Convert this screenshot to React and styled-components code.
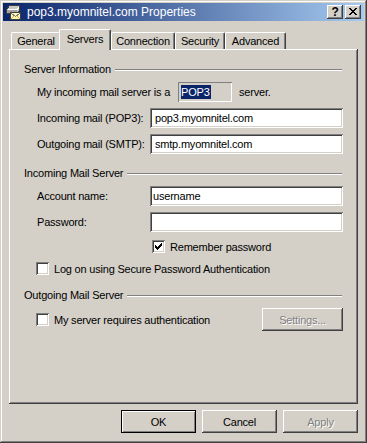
import React from "react";
import styled, { createGlobalStyle } from "styled-components";

const GlobalStyle = createGlobalStyle`
  html, body {
    margin: 0;
    padding: 0;
    background: #d4d0c8;
  }
  body {
    font-family: "Liberation Sans", Arial, sans-serif;
    font-size: 11px;
    letter-spacing: -0.2px;
    color: #000;
  }
`;

// pixel glyphs: [x, y, length] runs, one px high
const CHECK = [[6,0,1],[5,1,2],[0,2,1],[4,2,3],[0,3,2],[3,3,3],[0,4,5],[1,5,3],[2,6,1]];
const CROSS = [[0,0,2],[6,0,2],[1,1,2],[5,1,2],[2,2,4],[3,3,2],[2,4,4],[1,5,2],[5,5,2],[0,6,2],[6,6,2]];

const PixelGlyph = ({ rows, w, h }) => (
  <svg width={w} height={h} viewBox={`0 0 ${w} ${h}`} shapeRendering="crispEdges">
    {rows.map(([x, y, len], i) => (
      <rect key={i} x={x} y={y} width={len} height={1} fill="#000" />
    ))}
  </svg>
);

const MailIcon = () => (
  <svg width="16" height="16" viewBox="0 0 16 16" shapeRendering="crispEdges">
    <path d="M1.5 5.5 L4.5 1.5 H14.5 V6.5 L12.5 9.5 H1.5 Z" fill="#c8c8c8" stroke="#404040" />
    <path d="M2.5 5.5 H12.5 L14 3" fill="none" stroke="#ffffff" />
    <rect x="2" y="6" width="10" height="3" fill="#a0a0a0" />
    <rect x="5.5" y="8.5" width="10" height="7" fill="#fff6b0" stroke="#404040" />
    <path d="M6 9 L10.5 12.5 L15 9" fill="none" stroke="#808080" />
    <path d="M6 15 L9 12 M15 15 L12 12" fill="none" stroke="#c8b060" />
  </svg>
);

const raised = `
  box-shadow: inset -1px -1px #404040, inset 1px 1px #ffffff,
    inset -2px -2px #808080, inset 2px 2px #d4d0c8;
`;
const sunken = `
  box-shadow: inset 1px 1px #808080, inset -1px -1px #ffffff,
    inset 2px 2px #404040, inset -2px -2px #d4d0c8;
`;

const Window = styled.div`
  box-sizing: border-box;
  width: 367px;
  height: 443px;
  padding: 3px;
  background: #d4d0c8;
  box-shadow: inset -1px -1px #404040, inset 1px 1px #d4d0c8,
    inset -2px -2px #808080, inset 2px 2px #ffffff;
  display: flex;
  flex-direction: column;
`;

const TitleBar = styled.div`
  height: 18px;
  flex-shrink: 0;
  display: flex;
  align-items: center;
  padding: 0 3px 0 2px;
  background: linear-gradient(to right, #0a246a, #a6caf0);
  color: #fff;
`;

const TitleText = styled.span`
  font-size: 12px;
  letter-spacing: 0;
  margin-left: 6px;
  white-space: nowrap;
`;

const CaptionButtons = styled.div`
  margin-left: auto;
  display: flex;
  gap: 2px;
`;

const CaptionButton = styled.div`
  box-sizing: border-box;
  width: 16px;
  height: 14px;
  background: #d4d0c8;
  ${raised}
  display: flex;
  align-items: flex-start;
  justify-content: ${(p) => (p.$glyph ? "flex-start" : "center")};
  padding: ${(p) => (p.$glyph ? "3px 0 0 4px" : "0")};
  color: #000;
  font-weight: bold;
  font-size: 12px;
  line-height: 14px;
`;

const TabStrip = styled.div`
  height: 28px;
  flex-shrink: 0;
  display: flex;
  align-items: flex-end;
  margin: 0 6px;
  padding-left: 2px;
`;

const Tab = styled.div`
  position: relative;
  z-index: ${(p) => (p.$active ? 2 : 1)};
  box-sizing: border-box;
  width: ${(p) => p.$w}px;
  height: ${(p) => (p.$active ? 21 : 17)}px;
  margin-left: ${(p) => (p.$active ? -2 : 0)}px;
  margin-bottom: ${(p) => (p.$active ? -1 : 0)}px;
  padding-bottom: ${(p) => (p.$active ? 2 : 0)}px;
  background: #d4d0c8;
  border-left: 1px solid #fff;
  border-top: 1px solid #fff;
  border-right: 1px solid #404040;
  border-radius: 2px 2px 0 0;
  box-shadow: inset -1px 0 #808080;
  display: flex;
  align-items: center;
  justify-content: center;
  white-space: nowrap;
`;

const Panel = styled.div`
  box-sizing: border-box;
  height: 355px;
  flex-shrink: 0;
  margin: 0 6px;
  padding: 13px 16px 0 15px;
  box-shadow: inset -1px -1px #404040, inset 1px 1px #ffffff, inset -2px -2px #808080;
  display: flex;
  flex-direction: column;
`;

const GroupHeader = styled.div`
  height: 14px;
  margin-top: ${(p) => p.$mt || 0}px;
  display: flex;
  align-items: center;
  white-space: nowrap;
`;

const GroupRule = styled.div`
  flex: 1;
  margin: 1px 0 0 4px;
  border-top: 1px solid #808080;
  border-bottom: 1px solid #ffffff;
`;

const Row = styled.div`
  height: ${(p) => p.$h || 20}px;
  margin-top: ${(p) => p.$mt}px;
  margin-right: -1px;
  padding-left: ${(p) => (p.$indent === undefined ? 13 : p.$indent)}px;
  display: flex;
  align-items: center;
  white-space: nowrap;
`;

const Label = styled.span`
  width: ${(p) => p.$w}px;
  flex-shrink: 0;
`;

const TextBox = styled.div`
  flex: 1;
  box-sizing: border-box;
  height: 20px;
  background: #fff;
  ${sunken}
  padding: 0 ${(p) => p.$pad}px;
  display: flex;
  align-items: center;
`;

const StaticBox = styled.div`
  box-sizing: border-box;
  width: 54px;
  height: 20px;
  padding-left: 3px;
  box-shadow: inset 1px 1px #808080, inset -1px -1px #ffffff;
  display: flex;
  align-items: center;
  margin-right: 7px;
`;

const Selected = styled.span`
  background: #0a246a;
  color: #fff;
  line-height: 14px;
  padding: 0 1px 0 0;
`;

const CheckBox = styled.span`
  box-sizing: border-box;
  width: 13px;
  height: 13px;
  flex-shrink: 0;
  margin-right: 5px;
  background: #fff;
  ${sunken}
  padding: 3px 0 0 3px;
  display: flex;
  align-items: flex-start;
`;

const Button = styled.div`
  box-sizing: border-box;
  width: ${(p) => p.$w || 75}px;
  height: 23px;
  flex-shrink: 0;
  background: #d4d0c8;
  ${(p) =>
    p.$default
      ? "box-shadow: inset 0 0 0 1px #000, inset 2px 2px #fff, inset -2px -2px #808080;"
      : raised}
  color: ${(p) => (p.$disabled ? "#808080" : "#000")};
  text-shadow: ${(p) => (p.$disabled ? "1px 1px 0 #fff" : "none")};
  display: flex;
  align-items: center;
  justify-content: center;
  margin-left: ${(p) => (p.$push ? "auto" : "0")};
`;

const ButtonRow = styled.div`
  height: 23px;
  margin-top: 6px;
  padding-right: 6px;
  display: flex;
  justify-content: flex-end;
  gap: 6px;
`;

const tabs = [
  { name: "General", w: 50 },
  { name: "Servers", w: 52, active: true },
  { name: "Connection", w: 64 },
  { name: "Security", w: 50 },
  { name: "Advanced", w: 61 },
];

export default function App() {
  return (
    <>
      <GlobalStyle />
      <Window>
        <TitleBar>
          <MailIcon />
          <TitleText>pop3.myomnitel.com Properties</TitleText>
          <CaptionButtons>
            <CaptionButton>?</CaptionButton>
            <CaptionButton $glyph>
              <PixelGlyph rows={CROSS} w={8} h={7} />
            </CaptionButton>
          </CaptionButtons>
        </TitleBar>

        <TabStrip>
          {tabs.map((t) => (
            <Tab key={t.name} $w={t.w} $active={t.active}>
              {t.name}
            </Tab>
          ))}
        </TabStrip>

        <Panel>
          <GroupHeader>
            Server Information
            <GroupRule />
          </GroupHeader>
          <Row $mt={6}>
            <Label $w={141}>My incoming mail server is a</Label>
            <StaticBox>
              <Selected>POP3</Selected>
            </StaticBox>
            server.
          </Row>
          <Row $mt={6}>
            <Label $w={113}>Incoming mail (POP3):</Label>
            <TextBox $pad={5}>pop3.myomnitel.com</TextBox>
          </Row>
          <Row $mt={6}>
            <Label $w={113}>Outgoing mail (SMTP):</Label>
            <TextBox $pad={5}>smtp.myomnitel.com</TextBox>
          </Row>

          <GroupHeader $mt={12}>
            Incoming Mail Server
            <GroupRule />
          </GroupHeader>
          <Row $mt={6}>
            <Label $w={113}>Account name:</Label>
            <TextBox $pad={3}>username</TextBox>
          </Row>
          <Row $mt={6}>
            <Label $w={113}>Password:</Label>
            <TextBox $pad={3} />
          </Row>
          <Row $mt={8} $h={13} $indent={128}>
            <CheckBox>
              <PixelGlyph rows={CHECK} w={7} h={7} />
            </CheckBox>
            Remember password
          </Row>
          <Row $mt={9} $h={13} $indent={12}>
            <CheckBox />
            Log on using Secure Password Authentication
          </Row>

          <GroupHeader $mt={13}>
            Outgoing Mail Server
            <GroupRule />
          </GroupHeader>
          <Row $mt={6} $h={23} $indent={12}>
            <CheckBox />
            My server requires authentication
            <Button $w={81} $disabled $push>
              Settings...
            </Button>
          </Row>
        </Panel>

        <ButtonRow>
          <Button $default>OK</Button>
          <Button>Cancel</Button>
          <Button $disabled>Apply</Button>
        </ButtonRow>
      </Window>
    </>
  );
}
